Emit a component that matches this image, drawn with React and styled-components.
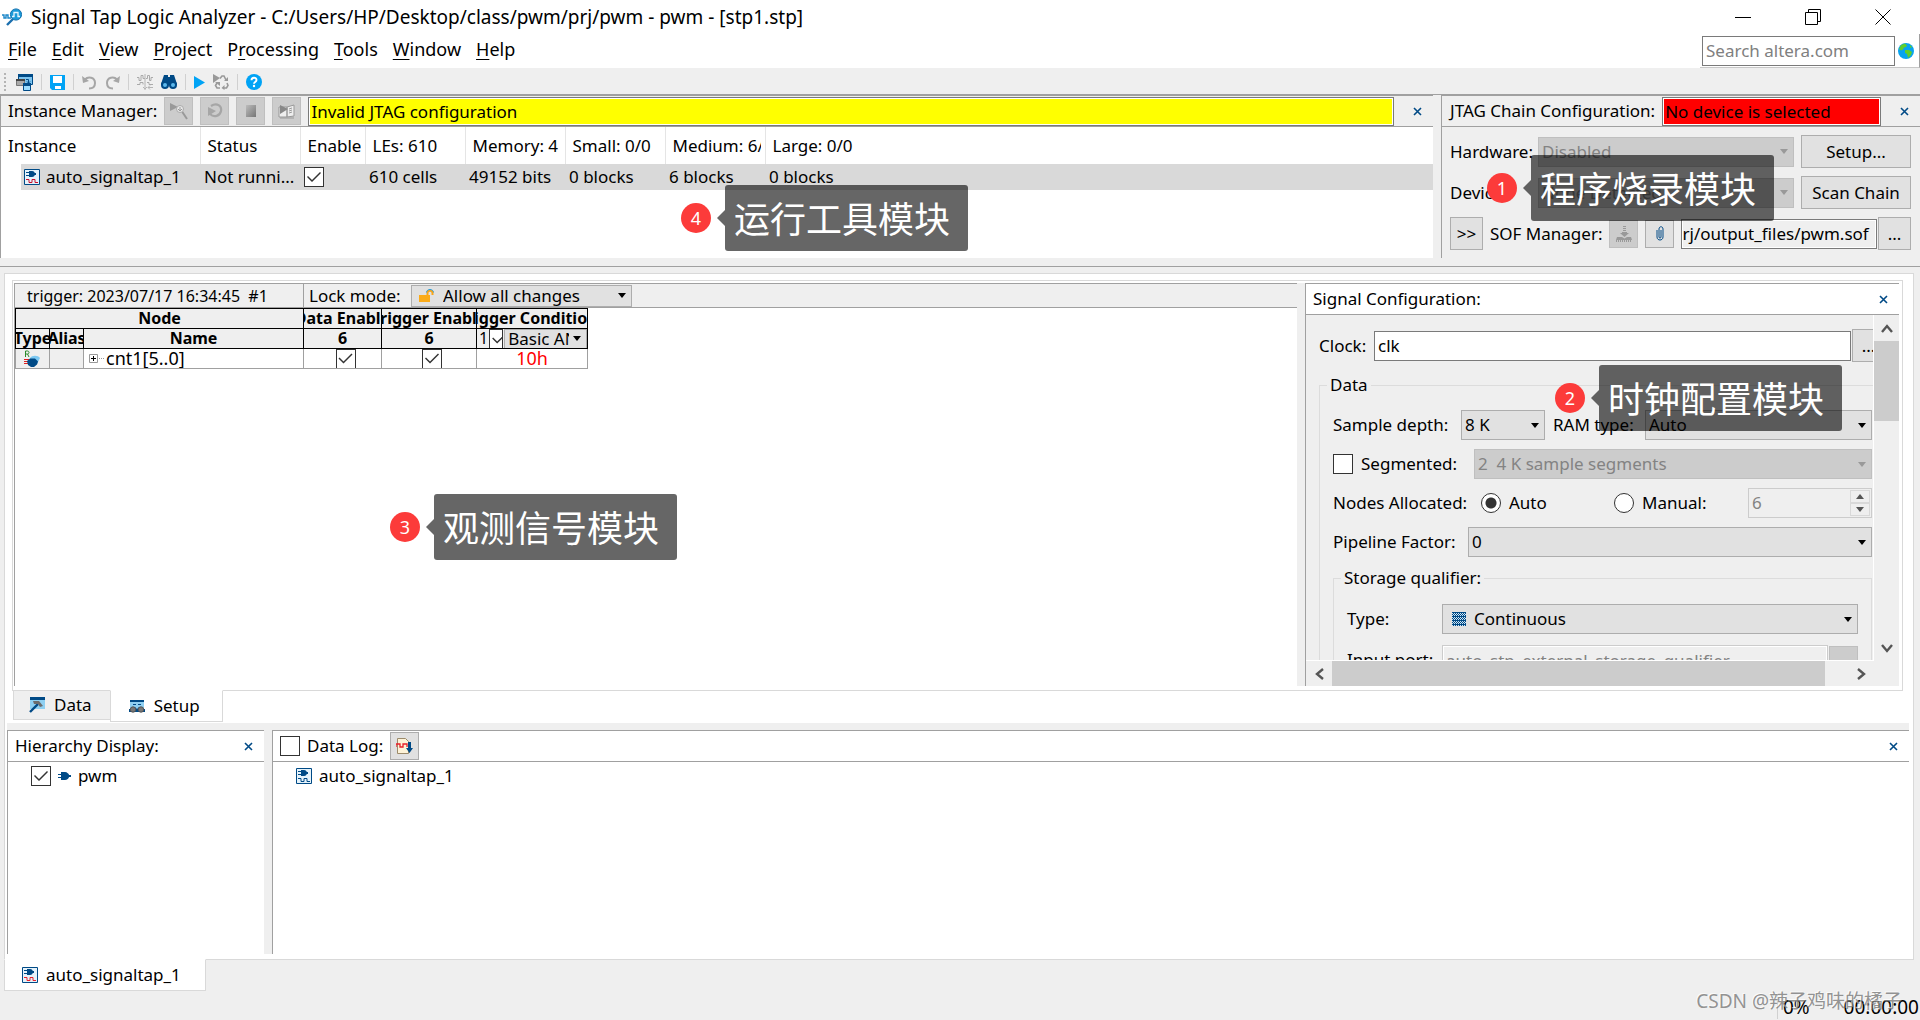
import React, { useState } from 'react';
import styled, { createGlobalStyle, css } from 'styled-components';

const GlobalStyle = createGlobalStyle`
    * {
        box-sizing: border-box;
    }

    body {
        margin: 0;
        background-color: #efefef;
    }

    body, button, input, select {
        font-family: 'Noto Sans', 'Noto Sans CJK SC', sans-serif;
        font-size: 17px;
        line-height: 24px;
        color: #000;
    }

    button {
        cursor: pointer;
    }
`

const Window = styled.div`
    position: relative;
    display: flex;
    flex-direction: column;
    min-height: 100vh;
    overflow: hidden;
    white-space: nowrap;
`

/* ---------- title and menu ---------- */

const TitleBar = styled.header`
    display: flex;
    align-items: center;
    height: 34px;
    padding: 0 2px;
    gap: 9px;
    background-color: #fff;
`

const Title = styled.h1`
    flex: 1;
    margin: 0;
    font-size: 19px;
    font-weight: 400;
`

const WindowButtons = styled.div`
    display: flex;

    button {
        display: flex;
        align-items: center;
        justify-content: center;
        width: 70px;
        height: 34px;
        border: none;
        background: none;
    }
`

const MenuRow = styled.div`
    display: flex;
    justify-content: space-between;
    height: 36px;
    background-color: #fff;
    border-bottom: 2px solid #efefef;
`

const Menu = styled.nav`
    display: flex;
    align-items: center;
    gap: 15px;
    height: 30px;
    padding: 0 8px;

    button {
        padding: 0;
        border: none;
        background: none;
        font-size: 18px;
    }

    u {
        text-underline-offset: 3px;
    }
`

const SearchBox = styled.div`
    display: flex;
    align-items: center;
    gap: 3px;
    padding: 0 5px 0 2px;
    border-right: 1px solid #a0a0a0;
    border-bottom: 1px solid #c8c8c8;

    input {
        width: 193px;
        height: 30px;
        padding: 0 3px;
        border: 1px solid #7a7a7a;
        outline: none;
    }

    input::placeholder {
        color: #808080;
        opacity: 1;
    }
`

/* ---------- toolbar ---------- */

const Toolbar = styled.div`
    display: flex;
    align-items: center;
    gap: 8px;
    height: 25px;
    padding: 0 4px;
    border-bottom: 1px solid #a0a0a0;
`

const ToolButton = styled.button`
    display: flex;
    padding: 0;
    border: none;
    background: none;
`

const ToolSeparator = styled.span`
    width: 1px;
    height: 16px;
    background-color: #d0d0d0;
`

const ToolHandle = styled.span`
    width: 2px;
    height: 18px;
    margin-right: 2px;
    background: repeating-linear-gradient(#b4b4b4 0 2px, transparent 2px 4px);
`

/* ---------- form controls ---------- */

const Button = styled.button`
    width: ${props => props.$width}px;
    height: 33px;
    padding: 0;
    flex: none;
    border: 1px solid #adadad;
    background-color: #e1e1e1;
`

const IconButton = styled.button`
    display: flex;
    align-items: center;
    justify-content: center;
    flex: none;
    width: 29px;
    height: 28px;
    padding: 0;
    border: 1px solid #adadad;
    background-color: #e1e1e1;

    &:disabled {
        border-color: #bfbfbf;
        background-color: #ccc;
        cursor: default;
    }
`

const CloseButton = styled.button`
    display: flex;
    align-items: center;
    justify-content: center;
    width: 32px;
    height: 24px;
    padding: 0;
    border: none;
    background: none;
`

const SelectWrapper = styled.div`
    display: grid;
    grid-template-columns: ${props => props.$icon ? '24px' : '0px'} minmax(0, 1fr) 14px;
    align-items: center;
    flex: ${props => props.$width ? 'none' : '1'};
    width: ${props => props.$width ? `${props.$width}px` : 'auto'};
    min-width: 0;

    select {
        grid-area: 1 / 1 / 2 / 4;
        width: 100%;
        height: ${props => props.$height || 30}px;
        line-height: ${props => (props.$height || 30) - 2}px;
        padding: 0 17px 0 ${props => props.$icon ? 31 : 3}px;
        border: 1px solid #adadad;
        border-radius: 0;
        background-color: #e1e1e1;
        appearance: none;
        outline: none;
    }

    select:disabled {
        border-color: #bfbfbf;
        background-color: #ccc;
        color: #838383;
        opacity: 1;
    }

    .icon {
        grid-area: 1 / 1;
        justify-self: end;
        pointer-events: none;
    }

    .arrow {
        grid-area: 1 / 3;
        pointer-events: none;
    }
`

const TextInput = styled.input`
    flex: 1;
    min-width: 0;
    height: 30px;
    padding: 0 3px;
    border: 1px solid #7a7a7a;
    border-radius: 0;
    background-color: ${props => props.$muted ? '#efefef' : '#fff'};
    outline: none;

    &:read-only {
        padding: 0;
        box-shadow: inset 0 0 0 1px #fff;
    }

    &:disabled {
        padding: 0 3px;
        border-color: #ccc;
        color: #838383;
    }
`

const Checkbox = styled.input.attrs({ type: 'checkbox' })`
    flex: none;
    width: 20px;
    height: 20px;
    margin: 0;
    border: 1px solid #333;
    background-color: #fff;
    overflow: hidden;
    appearance: none;

    &:checked::before {
        content: '';
        display: block;
        width: 18px;
        height: 18px;
        background-color: #333;
        clip-path: polygon(2px 9px, 3px 8px, 7px 12px, 15px 4px, 16px 5px, 7px 14px);
    }
`

const Radio = styled.input.attrs({ type: 'radio' })`
    flex: none;
    width: 20px;
    height: 20px;
    margin: 0;
    border: 1px solid #333;
    border-radius: 50%;
    background-color: #fff;
    appearance: none;

    &:checked {
        background: radial-gradient(circle, #333 5px, #fff 6px);
    }
`

/* ---------- top panels ---------- */

const TopPanels = styled.div`
    display: flex;
    gap: 8px;
    padding-bottom: 8px;
    border-bottom: 1px solid #a0a0a0;
`

const Panel = styled.section`
    display: flex;
    flex-direction: column;
    min-width: 0;
    flex: ${props => props.$width ? 'none' : '1'};
    width: ${props => props.$width ? `${props.$width}px` : 'auto'};
    border-left: 1px solid #a0a0a0;
    border-top: 1px solid #a0a0a0;
    background-color: ${props => props.$white ? '#fff' : '#efefef'};
`

const PanelHeader = styled.div`
    display: flex;
    align-items: center;
    flex: none;
    gap: 7px;
    height: 31px;
    padding-left: ${props => props.$indent || 7}px;
    border-bottom: 1px solid #a0a0a0;
    background-color: ${props => props.$white ? '#fff' : '#efefef'};

    h2, label {
        margin: 0;
        font-size: 17px;
        font-weight: 400;
        line-height: 26px;
    }

    .push {
        margin-left: auto;
    }
`

const StatusMessage = styled.output`
    flex: 1;
    height: 29px;
    padding: 0 2px;
    line-height: 27px;
    border: 1px solid #7a7a7a;
    box-shadow: inset 0 0 0 1px #fff;
    background-color: ${props => props.$color};
`

const InstanceTable = styled.table`
    width: 100%;
    table-layout: fixed;
    border-collapse: collapse;

    th, td {
        padding: 0;
        font-weight: 400;
        text-align: left;
        overflow: hidden;
    }

    th {
        height: 37px;
    }

    th > div {
        margin-right: 4px;
        padding-left: 7px;
        overflow: hidden;
    }

    th + th {
        border-left: 1px solid #e5e5e5;
    }

    td {
        height: 26px;
        padding-left: 4px;
        background-color: #d9d9d9;
    }

    td:first-child {
        padding-left: 20px;
        background-color: #fff;
    }

    input {
        display: block;
    }
`

const InstanceName = styled.div`
    display: flex;
    align-items: center;
    gap: 6px;
    height: 26px;
    padding-left: 3px;
    background-color: #d9d9d9;
`

const JtagBody = styled.div`
    display: flex;
    flex-direction: column;
    gap: 8px;
    padding: 8px 9px 8px 8px;
`

const JtagRow = styled.div`
    display: flex;
    align-items: center;
    gap: 7px;

    .fieldLabel {
        width: 81px;
    }
`

const FilePicker = styled.div`
    display: flex;
    align-items: center;
    flex: 1;
    min-width: 0;
    gap: 1px;
`

/* ---------- tab pane ---------- */

const TabPane = styled.main`
    display: flex;
    flex: 1;
    flex-direction: column;
    margin: 6px 6px 0 4px;
    border: 1px solid #d9d9d9;
    background-color: #fff;
`

const SetupPane = styled.div`
    display: flex;
    margin: 6px 10px 0 7px;
    padding: 2px 3px 4px 1px;
    border: 1px solid #d9d9d9;
`

const NodePanel = styled.section`
    flex: 1;
    min-width: 0;
    border-left: 1px solid #a0a0a0;
    border-top: 1px solid #a0a0a0;
`

const TriggerBar = styled.div`
    display: flex;
    align-items: center;
    height: 24px;
    background-color: #efefef;
    border-bottom: 1px solid #a0a0a0;

    .trigger {
        width: 289px;
        padding-left: 12px;
        font-size: 16px;
        white-space: pre;
        border-right: 1px solid #a0a0a0;
    }

    .lockLabel {
        width: 107px;
        padding-left: 5px;
    }
`

const NodeTable = styled.table`
    width: 572px;
    table-layout: fixed;
    border-collapse: collapse;
    font-size: 16px;

    th, td {
        height: 20px;
        padding: 0;
        overflow: hidden;
    }

    th {
        border: 1px solid #000;
        background-color: #efefef;
        font-weight: 700;
    }

    td {
        border: 1px solid #a0a0a0;
    }

    .cell {
        display: flex;
        align-items: center;
        justify-content: center;
        height: 19px;
        line-height: 19px;
        overflow: hidden;
    }

    .name {
        justify-content: flex-start;
        gap: 2px;
        padding-left: 5px;
        font-size: 18px;
    }

    .tick {
        padding-left: 6px;
    }

    .condition {
        font-weight: 400;
        justify-content: flex-start;
        padding-left: 2px;
        gap: 1px;

        input {
            width: 14px;
        }
    }

    .value {
        color: #f00;
        font-size: 18px;
    }

    .gray {
        background-color: #efefef;
    }
`

const Splitter = styled.div`
    flex: none;
    width: 8px;
    background-color: #efefef;
`

const ConfigScroll = styled.div`
    display: grid;
    grid-template-columns: minmax(0, 1fr) 25px;
    grid-template-rows: 346px 25px;
`

const ConfigForm = styled.form`
    padding: 14px 0 0 13px;
    overflow: hidden;
    border-right: 1px solid #fff;
    border-bottom: 1px solid #fff;
`

const FormRow = styled.div`
    display: flex;
    align-items: center;
    min-height: 30px;
    gap: ${props => props.$gap || 8}px;
    padding-right: ${props => props.$end || 0}px;
    margin-right: -${props => props.$bleed || 0}px;
`

const FieldLabel = styled.label`
    flex: none;
    width: ${props => props.$width ? `${props.$width}px` : 'auto'};
`

const Group = styled.fieldset`
    display: flex;
    flex-direction: column;
    gap: ${props => props.$gap || 9}px;
    min-width: 0;
    margin: ${props => props.$inner ? '0 1px 0 0' : '11px 0 0 0'};
    padding: ${props => props.$inner ? '14px 13px 40px 13px' : '13px 0 0 13px'};
    border: 1px solid #dcdcdc;
    ${props => !props.$inner && css`
        border-right: none;
    `}

    legend {
        margin-left: -6px;
        padding: 0 3px;
    }
`

const SpinBox = styled.div`
    display: flex;
    margin-left: auto;
    margin-right: 1px;
    width: 124px;
    height: 30px;
    padding: 1px;
    border: 1px solid #ccc;

    input {
        flex: 1;
        min-width: 0;
        padding: 0 2px;
        border: none;
        background: none;
        color: #838383;
        appearance: textfield;
    }

    input::-webkit-inner-spin-button {
        display: none;
    }

    div {
        display: flex;
        flex-direction: column;
        width: 20px;
    }

    button {
        display: flex;
        align-items: center;
        justify-content: center;
        flex: 1;
        padding: 0;
        border: 1px solid #d9d9d9;
        background: none;
    }
`

const ScrollTrack = styled.div`
    display: flex;
    align-items: center;
    flex-direction: ${props => props.$horizontal ? 'row' : 'column'};
    background-color: #efefef;

    button {
        display: flex;
        align-items: center;
        justify-content: center;
        width: ${props => props.$horizontal ? 26 : 25}px;
        height: ${props => props.$horizontal ? 25 : 26}px;
        padding: 0;
        border: none;
        background: none;
    }

    .thumb {
        flex: ${props => props.$horizontal ? 492 : 79};
        align-self: stretch;
        background-color: #ccc;
    }

    .rest {
        flex: ${props => props.$horizontal ? 23 : 213};
    }
`

const Tabs = styled.div`
    display: flex;
    align-items: flex-start;
    height: 33px;
    margin-top: -1px;
    padding-left: 8px;
`

const Tab = styled.button`
    display: flex;
    align-items: center;
    gap: 9px;
    height: ${props => props.$active ? 32 : 30}px;
    padding: 0 ${props => props.$active ? 22 : 18}px 0 ${props => props.$active ? 18 : 15}px;
    border: 1px solid #d9d9d9;
    background-color: ${props => props.$active ? '#fff' : '#efefef'};
    ${props => props.$active && css`
        margin-left: -1px;
        border-top-color: #fff;
    `}
`

const BottomPanels = styled.div`
    display: flex;
    flex: 1;
    margin: 0 4px 5px 2px;
    border-top: 7px solid #efefef;
`

const TreeRow = styled.div`
    display: flex;
    align-items: center;
    gap: 7px;
    height: 28px;
    padding-left: ${props => props.$indent}px;
`

/* ---------- bottom ---------- */

const FileTabs = styled.div`
    display: flex;
    height: 61px;
    margin-top: -1px;
    padding-left: 4px;
`

const FileTab = styled.button`
    display: flex;
    align-items: center;
    gap: 8px;
    width: 202px;
    height: 32px;
    padding: 0 17px;
    border: 1px solid #d9d9d9;
    border-top-color: #fff;
    background-color: #fff;
`

const StatusBar = styled.footer`
    display: flex;
    align-items: center;
    gap: 34px;
    margin-left: auto;
    align-self: flex-end;
    height: 26px;
    padding-right: 1px;
    font-size: 19px;

    span:first-child {
        padding-left: 5px;
        border-left: 1px solid #d0d0d0;
    }
`

const Watermark = styled.div`
    position: absolute;
    right: 18px;
    bottom: 5px;
    font-size: 19px;
    line-height: 28px;
    color: rgba(120, 120, 120, 0.8);
    text-shadow: -1px -1px 0 rgba(255, 255, 255, 0.7);
`

/* ---------- callouts over the panels ---------- */

const Callout = styled.div`
    position: absolute;
    top: ${props => props.$top}px;
    ${props => props.$right ? `right: ${props.$right}px` : `left: ${props.$left}px`};
    display: flex;
    align-items: center;

    .number {
        display: flex;
        align-items: center;
        justify-content: center;
        width: 30px;
        height: 30px;
        border-radius: 50%;
        background-color: #fc3b3a;
        color: #fff;
        font-size: 18px;
    }

    .pointer {
        margin-left: 6px;
        border: 8px solid transparent;
        border-left: none;
        border-right-color: rgba(0, 0, 0, 0.6);
    }

    .text {
        height: 66px;
        padding: 0 18px 0 9px;
        border-radius: 3px;
        background-color: rgba(0, 0, 0, 0.6);
        color: #fff;
        font-family: 'Noto Sans CJK SC', sans-serif;
        font-size: 36px;
        line-height: 64px;
    }
`

const DARK = '#004a86';
const SKY = '#00a3f5';

/* ---------- icons ---------- */

const Svg = ({ w = 16, h = 16, children, ...rest }) => (
    <svg width={w} height={h} viewBox={`0 0 ${w} ${h}`} aria-hidden='true' {...rest}>{children}</svg>
)

const LogoIcon = () => (
    <Svg w={20} h={18}>
        <path d='M0 7h2v3h2V7h2v3h3' fill='none' stroke='#1b86c8' strokeWidth='1.4' />
        <path d='M11 11L5 17' stroke='#1b6fae' strokeWidth='2.4' />
        <circle cx='14' cy='6.5' r='5.6' fill='#1b9ad8' stroke='#1573b0' />
        <path d='M10 8.500h2V4.500h4v4h2' fill='none' stroke='#e8f6ff' strokeWidth='1.3' />
    </Svg>
)

const CloseIcon = () => (
    <Svg w={9} h={9}><path d='M1 1l7 7M8 1L1 8' stroke={DARK} strokeWidth='1.6' /></Svg>
)

const ArrowIcon = ({ color = '#000' }) => (
    <Svg className='arrow' w={8} h={5}><path d='M0 0h8L4 5z' fill={color} /></Svg>
)

const GlobeIcon = () => (
    <Svg>
        <circle cx='8' cy='8' r='8' fill='#08a3ef' />
        <path d='M3 2l4-1.5 2 2-1 1.5-2 .5-1 2-2 1-2-1.500zM7 7l4 0 3 2-1 3-3 3-1-4-2-1zM12 2l2 2-2 1z' fill='#5fce2c' />
    </Svg>
)

const ManagerIcon = () => (
    <Svg w={17} h={17}>
        <path d='M2.500.5h14v10h-14z' fill='#7cc4ef' stroke={DARK} />
        <path d='M2 0h15v3H2z' fill={DARK} />
        <path d='M.5 5.500h8v6h-8z' fill='#a9a9a9' stroke='#777' />
        <path d='M0 5h9v2H0z' fill='#444' />
        <path d='M7.500 9.500h7v7h-7z' fill='#9bdcff' stroke={DARK} />
        <path d='M7 9h8v3H7z' fill={DARK} />
        <path d='M10 5.500h2.500V9M11 7.500l1.500 1.500L14 7.500' fill='none' stroke={DARK} />
    </Svg>
)

const SaveIcon = () => (
    <Svg w={15} h={15}>
        <path d='M0 0h15v15H2l-2-2z' fill={SKY} />
        <path d='M3 1h9v7H3zM5 11h6v3H5z' fill='#fff' />
    </Svg>
)

const UndoIcon = ({ flip }) => (
    <Svg w={15} h={15}>
        <g transform={flip ? 'translate(15 0) scale(-1 1)' : undefined}>
            <path d='M3 4.500C6 1 13 2 13 8c0 4-3 5.500-6 5.500' fill='none' stroke='#a6a6a6' strokeWidth='2' />
            <path d='M0 1l1 7 6-2z' fill='#a6a6a6' />
        </g>
    </Svg>
)

const WaveIcon = () => (
    <Svg w={16} h={16}>
        <path d='M0 3.500h2v3h2v-5h2v3h2M9 4.500h1.500v-3h2v5h1.500v-3h2M0 10.500h3v-2h3v2M10 8.500h2v2h4' fill='none' stroke='#aaa' />
        <path d='M8 0v16M6 13l2 2 2-2M11 13.500h5M13 11.500l-2 2 2 2' fill='none' stroke='#b4b4b4' />
    </Svg>
)

const BinocularsIcon = () => (
    <Svg w={16} h={16}>
        <path d='M3 1h4v2h2V1h4l3 9v1H0v-1z' fill={DARK} />
        <circle cx='4' cy='11' r='4' fill={DARK} />
        <circle cx='12' cy='11' r='4' fill={DARK} />
        <circle cx='4' cy='11' r='2' fill='#5bb8ec' />
        <circle cx='12' cy='11' r='2' fill='#5bb8ec' />
    </Svg>
)

const PlayIcon = () => (
    <Svg w={11} h={13}><path d='M0 0l11 6.500L0 13z' fill={SKY} /></Svg>
)

const RecycleIcon = () => (
    <Svg w={16} h={16}>
        <path d='M0 0l7 4-7 5z' fill='#999' />
        <path d='M7 4.500l2-2.500h2l2 4M14 9l1 2.500-1.500 2.500h-3M7 14H4l-1.500-2.500L4 9' fill='none' stroke='#999' strokeWidth='1.600' />
        <path d='M15 3v4h-4zM11.500 11v5l-3-2zM2 8h5v4z' fill='#999' />
    </Svg>
)

const HelpIcon = () => (
    <Svg>
        <circle cx='8' cy='8' r='8' fill={SKY} />
        <path d='M5.500 6.200C5.500 3 10.500 3 10.500 6c0 2-2.500 2-2.500 3.800' fill='none' stroke='#fff' strokeWidth='1.900' />
        <circle cx='8' cy='12' r='1.200' fill='#fff' />
    </Svg>
)

const RunOnceIcon = () => (
    <Svg w={20} h={18}>
        <path d='M1 1l8 4-8 4z' fill='#999' />
        <path d='M12 8l6 9' stroke='#999' strokeWidth='2' />
        <circle cx='11' cy='7' r='3.500' fill='#e8e8e8' stroke='#aaa' />
        <path d='M11 5v4M9 7l2 2 2-2' fill='none' stroke='#999' />
    </Svg>
)

const LoopIcon = () => (
    <Svg w={18} h={18}>
        <path d='M5 4C11 0 16 4 15 9c-1 5-7 7-11 3' fill='none' stroke='#a6a6a6' strokeWidth='2.200' />
        <path d='M2 5l8 4-8 5z' fill='#a6a6a6' />
    </Svg>
)

const StopIcon = () => (
    <Svg w={14} h={14}>
        <defs>
            <linearGradient id='stopFill' x1='0' y1='0' x2='1' y2='1'>
                <stop offset='0' stopColor='#bcbcbc' />
                <stop offset='1' stopColor='#757575' />
            </linearGradient>
        </defs>
        <path d='M2 1h10v12H2z' fill='url(#stopFill)' />
    </Svg>
)

const BookIcon = () => (
    <Svg w={18} h={16}>
        <path d='M1 4h8v10H1zM9 4l7-2v11l-7 1z' fill='#eee' stroke='#999' />
        <path d='M2 2l8 4-8 5z' fill='#888' />
        <path d='M11 6l3-1M11 8l3-1M11 10l3-1M2 15h14' stroke='#999' />
    </Svg>
)

const InstanceIcon = ({ wave = '#c8102e' }) => (
    <Svg>
        <path d='M.5.5h15v15H.5z' fill='#e6f3fb' stroke={DARK} />
        <path d='M5 2h3c4 0 4 6 0 6H5zM2 3h3v1H2zM2 6h3v1H2zM10 4h2v2h-2z' fill={DARK} />
        <path d='M2 10.500h3v3h3v-3h3v3h3' fill='none' stroke={wave} />
    </Svg>
)

const GateIcon = () => (
    <Svg w={13} h={8}><path d='M3 0h4c2 0 4 2 4 3h2v2h-2c0 1-2 3-4 3H3V6H0V5h3V3H0V2h3z' fill={DARK} /></Svg>
)

const RegisterIcon = () => (
    <Svg w={17} h={17}>
        <path d='M1.500 7V1h2c2 0 2 3 0 3h-2M3.500 4L5 7' fill='none' stroke='#2a8a2a' />
        <path d='M0 9.500h5M0 11.500h5M0 13.500h5' stroke='#e02020' />
        <path d='M6 8c2-3 8-3 10 0l-3 6H7z' fill='#7cc8f2' />
        <path d='M3 11l3-2.500h5l3 3-1 3-3 2.500H7l-3-2z' fill={DARK} />
    </Svg>
)

const LockIcon = ({ className }) => (
    <Svg className={className} w={16} h={14}>
        <path d='M8.500 6V4c0-3 5-3 5 0v2' fill='none' stroke='#f9a61a' strokeWidth='2' />
        <path d='M7.500 3.500c0-4 7-4 7 0' fill='none' stroke='#2c9bd2' />
        <path d='M0 6h11v7H0z' fill='#fbab18' />
    </Svg>
)

const ProgramIcon = () => (
    <Svg>
        <path d='M7 0h3v1H7zM7 2h3v1H7zM7 4h3v1H7zM6 6h5v1H6zM4 7h9L8.500 11z' fill='#999' />
        <path d='M1 11h5l2.500 1.500L11 11h4l1 3H0z' fill='#999' />
        <path d='M0 15h16' stroke='#999' strokeWidth='2' strokeDasharray='1 1' />
    </Svg>
)

const ClipIcon = () => (
    <Svg w={8} h={15}>
        <path d='M1 4v7c0 4 6 4 6 0V3c0-3-4-3-4 0v8c0 1.500 2 1.500 2 0V4' fill='none' stroke={DARK} />
    </Svg>
)

const ContinuousIcon = ({ className }) => (
    <Svg className={className} w={14} h={14}>
        <defs>
            <pattern id='weave' width='4' height='4' patternUnits='userSpaceOnUse'>
                <path d='M0 0h4v4H0z' fill={DARK} />
                <path d='M0 1h1v1H0zM1 2h1v1H1zM3 2h1v1H3zM2 3h1v1H2zM2 1h1v1H2zM0 3h1v1H0z' fill='#cfe6f5' />
            </pattern>
        </defs>
        <path d='M0 0h14v14H0z' fill='url(#weave)' />
    </Svg>
)

const DataTabIcon = () => (
    <Svg w={16} h={16}>
        <path d='M1 0h15v12H1z' fill='#8fd0f2' />
        <path d='M1 0h15v3H1z' fill={DARK} />
        <path d='M1 15l8-8' stroke={DARK} strokeWidth='2.400' />
        <path d='M4 4h6l4 5-3 1-2-3H5z' fill='#6d6d6d' />
    </Svg>
)

const SetupTabIcon = () => (
    <Svg w={16} h={13}>
        <path d='M1 0h14v11H1z' fill='#8fd0f2' />
        <path d='M1 0h14v2H1zM4 4h3v1H4zM9 4h3v1H9z' fill={DARK} />
        <path d='M0 12V9h1l2-2h3l2 2 2-2h3l2 2h1v3z' fill={DARK} />
        <circle cx='4' cy='9.500' r='2.700' fill='#777' stroke='#555' />
        <circle cx='12' cy='9.500' r='2.700' fill='#777' stroke='#555' />
    </Svg>
)

const LogIcon = () => (
    <Svg w={17} h={16}>
        <path d='M1.500.5h8l3 3v12h-11z' fill='#fdf3d8' stroke='#9c8b6b' />
        <path d='M0 9V6h4v3h3V6h4v3' fill='none' stroke='#e8202a' strokeWidth='1.300' />
        <path d='M12 4h3v6h2l-3.500 5L10 10h2z' fill={DARK} />
    </Svg>
)

const Chevron = ({ d, w, h }) => (
    <Svg w={w} h={h}><path d={d} fill='none' stroke='#555' strokeWidth='2.400' /></Svg>
)

const TreeExpander = () => (
    <Svg w={15} h={9}>
        <path d='M.5.5h8v8h-8z' fill='#fff' stroke='#999' />
        <path d='M2 4.500h5M4.500 2v5' stroke='#000' />
        <path d='M10 4.500h5' stroke='#999' strokeDasharray='1 1' />
    </Svg>
)

/* ---------- components ---------- */

const Select = ({ value, icon, width, height, ...rest }) => (
    <SelectWrapper $width={width} $height={height} $icon={!!icon}>
        <select {...rest}>
            <option>{value}</option>
        </select>
        {icon}
        <ArrowIcon color={rest.disabled ? '#999' : '#000'} />
    </SelectWrapper>
)

const menuItems = [
    ['', 'F', 'ile'],
    ['', 'E', 'dit'],
    ['', 'V', 'iew'],
    ['', 'P', 'roject'],
    ['P', 'r', 'ocessing'],
    ['', 'T', 'ools'],
    ['', 'W', 'indow'],
    ['', 'H', 'elp']
];

const columns = ['Status', 'Enable', 'LEs: 610', 'Memory: 4', 'Small: 0/0', 'Medium: 6/6', 'Large: 0/0'];
const columnWidths = [199, 100, 65, 100, 100, 100, 100];

const callouts = [
    { number: 1, text: '程序烧录模块', top: 155, right: 146 },
    { number: 2, text: '时钟配置模块', top: 365, right: 78 },
    { number: 3, text: '观测信号模块', top: 494, left: 390 },
    { number: 4, text: '运行工具模块', top: 185, left: 681 }
];

const Toolbox = () => (
    <Toolbar role='toolbar'>
        <ToolHandle />
        <ToolButton aria-label='Instance manager'><ManagerIcon /></ToolButton>
        <ToolSeparator />
        <ToolButton aria-label='Save'><SaveIcon /></ToolButton>
        <ToolSeparator />
        <ToolButton aria-label='Undo'><UndoIcon /></ToolButton>
        <ToolButton aria-label='Redo'><UndoIcon flip /></ToolButton>
        <ToolSeparator />
        <ToolButton aria-label='Insert node'><WaveIcon /></ToolButton>
        <ToolButton aria-label='Find'><BinocularsIcon /></ToolButton>
        <ToolSeparator />
        <ToolButton aria-label='Run analysis'><PlayIcon /></ToolButton>
        <ToolButton aria-label='Autorun analysis'><RecycleIcon /></ToolButton>
        <ToolSeparator />
        <ToolButton aria-label='Help'><HelpIcon /></ToolButton>
    </Toolbar>
)

const InstanceManager = () => {
    const [enabled, setEnabled] = useState(true);

    return (
        <Panel $white>
            <PanelHeader>
                <h2>Instance Manager:</h2>
                <IconButton disabled aria-label='Run'><RunOnceIcon /></IconButton>
                <IconButton disabled aria-label='Autorun'><LoopIcon /></IconButton>
                <IconButton disabled aria-label='Stop'><StopIcon /></IconButton>
                <IconButton disabled aria-label='Read data'><BookIcon /></IconButton>
                <StatusMessage $color='#ff0'>Invalid JTAG configuration</StatusMessage>
                <CloseButton aria-label='Close'><CloseIcon /></CloseButton>
            </PanelHeader>
            <InstanceTable>
                <colgroup>
                    {columnWidths.map((width, index) => <col key={index} width={width} />)}
                    <col />
                </colgroup>
                <thead>
                    <tr>
                        <th><div>Instance</div></th>
                        {columns.map(column => <th key={column}><div>{column}</div></th>)}
                    </tr>
                </thead>
                <tbody>
                    <tr>
                        <td><InstanceName><InstanceIcon />auto_signaltap_1</InstanceName></td>
                        <td>Not runni...</td>
                        <td><Checkbox aria-label='Enabled' checked={enabled} onChange={e => setEnabled(e.target.checked)} /></td>
                        <td>610 cells</td>
                        <td>49152 bits</td>
                        <td>0 blocks</td>
                        <td>6 blocks</td>
                        <td>0 blocks</td>
                    </tr>
                </tbody>
            </InstanceTable>
        </Panel>
    )
}

const JtagPanel = () => (
    <Panel $width={479}>
        <PanelHeader $indent={8}>
            <h2>JTAG Chain Configuration:</h2>
            <StatusMessage $color='#f00'>No device is selected</StatusMessage>
            <CloseButton aria-label='Close'><CloseIcon /></CloseButton>
        </PanelHeader>
        <JtagBody>
            <JtagRow>
                <label className='fieldLabel' htmlFor='hardware'>Hardware:</label>
                <Select id='hardware' value='Disabled' disabled />
                <Button $width={110}>Setup...</Button>
            </JtagRow>
            <JtagRow>
                <label className='fieldLabel' htmlFor='device'>Device:</label>
                <Select id='device' value='None Detected' disabled />
                <Button $width={110}>Scan Chain</Button>
            </JtagRow>
            <JtagRow>
                <Button $width={33}>&gt;&gt;</Button>
                <label htmlFor='sof'>SOF Manager:</label>
                <IconButton disabled aria-label='Program device'><ProgramIcon /></IconButton>
                <IconButton aria-label='Attach file'><ClipIcon /></IconButton>
                <FilePicker>
                    <TextInput id='sof' $muted readOnly value='rj/output_files/pwm.sof' />
                    <Button $width={33}>...</Button>
                </FilePicker>
            </JtagRow>
        </JtagBody>
    </Panel>
)

const NodeList = () => (
    <NodePanel>
        <TriggerBar>
            <span className='trigger'>trigger: 2023/07/17 16:34:45  #1</span>
            <label className='lockLabel' htmlFor='lockMode'>Lock mode:</label>
            <Select id='lockMode' value='Allow all changes' width={221} height={22} icon={<LockIcon className='icon' />} />
        </TriggerBar>
        <NodeTable>
            <colgroup>
                <col width='34' />
                <col width='34' />
                <col width='220' />
                <col width='78' />
                <col width='95' />
                <col width='111' />
            </colgroup>
            <thead>
                <tr>
                    <th colSpan='3'><div className='cell'>Node</div></th>
                    <th><div className='cell'>Data Enable</div></th>
                    <th><div className='cell'>Trigger Enable</div></th>
                    <th><div className='cell'>Trigger Conditions</div></th>
                </tr>
                <tr>
                    <th><div className='cell'>Type</div></th>
                    <th><div className='cell'>Alias</div></th>
                    <th><div className='cell'>Name</div></th>
                    <th><div className='cell'>6</div></th>
                    <th><div className='cell'>6</div></th>
                    <th>
                        <div className='cell condition'>
                            1
                            <Checkbox aria-label='Condition 1' defaultChecked />
                            <Select aria-label='Condition type' value='Basic AND' height={20} />
                        </div>
                    </th>
                </tr>
            </thead>
            <tbody>
                <tr>
                    <td className='gray'><div className='cell'><RegisterIcon /></div></td>
                    <td className='gray' />
                    <td><div className='cell name'><TreeExpander />cnt1[5..0]</div></td>
                    <td><div className='cell tick'><Checkbox aria-label='Data enable' defaultChecked /></div></td>
                    <td><div className='cell tick'><Checkbox aria-label='Trigger enable' defaultChecked /></div></td>
                    <td><div className='cell value'>10h</div></td>
                </tr>
            </tbody>
        </NodeTable>
    </NodePanel>
)

const SignalConfiguration = () => {
    const [allocation, setAllocation] = useState('auto');

    return (
        <Panel $width={594}>
            <PanelHeader $white>
                <h2>Signal Configuration:</h2>
                <CloseButton className='push' aria-label='Close'><CloseIcon /></CloseButton>
            </PanelHeader>
            <ConfigScroll>
                <ConfigForm>
                    <FormRow $gap={1} $bleed={12}>
                        <FieldLabel htmlFor='clock' $width={54}>Clock:</FieldLabel>
                        <TextInput id='clock' defaultValue='clk' />
                        <Button type='button' $width={33}>...</Button>
                    </FormRow>
                    <Group>
                        <legend>Data</legend>
                        <FormRow $end={1}>
                            <FieldLabel htmlFor='depth' $width={120}>Sample depth:</FieldLabel>
                            <Select id='depth' value='8 K' width={84} />
                            <FieldLabel htmlFor='ram' $width={84}>RAM type:</FieldLabel>
                            <Select id='ram' value='Auto' />
                        </FormRow>
                        <FormRow $end={1}>
                            <Checkbox id='segmented' />
                            <FieldLabel htmlFor='segmented' $width={105}>Segmented:</FieldLabel>
                            <Select aria-label='Segments' value={'2\u00a0 4 K sample segments'} disabled />
                        </FormRow>
                        <FormRow>
                            <FieldLabel as='span' $width={140}>Nodes Allocated:</FieldLabel>
                            <Radio id='auto' name='nodes' checked={allocation === 'auto'} onChange={() => setAllocation('auto')} />
                            <FieldLabel htmlFor='auto' $width={97}>Auto</FieldLabel>
                            <Radio id='manual' name='nodes' checked={allocation === 'manual'} onChange={() => setAllocation('manual')} />
                            <FieldLabel htmlFor='manual'>Manual:</FieldLabel>
                            <SpinBox>
                                <input type='number' aria-label='Nodes' defaultValue='6' disabled />
                                <div>
                                    <button type='button' aria-label='Increase'><Svg w={8} h={5}><path d='M0 5h8L4 0z' fill='#555' /></Svg></button>
                                    <button type='button' aria-label='Decrease'><Svg w={8} h={5}><path d='M0 0h8L4 5z' fill='#555' /></Svg></button>
                                </div>
                            </SpinBox>
                        </FormRow>
                        <FormRow $end={1}>
                            <FieldLabel htmlFor='pipeline' $width={127}>Pipeline Factor:</FieldLabel>
                            <Select id='pipeline' value='0' />
                        </FormRow>
                        <Group $inner $gap={11}>
                            <legend>Storage qualifier:</legend>
                            <FormRow>
                                <FieldLabel htmlFor='type' $width={87}>Type:</FieldLabel>
                                <Select id='type' value='Continuous' icon={<ContinuousIcon className='icon' />} />
                            </FormRow>
                            <FormRow $gap={1}>
                                <FieldLabel htmlFor='port' $width={94}>Input port:</FieldLabel>
                                <TextInput id='port' $muted disabled defaultValue='auto_stp_external_storage_qualifier' />
                                <IconButton type='button' disabled aria-label='Browse' />
                            </FormRow>
                        </Group>
                    </Group>
                </ConfigForm>
                <ScrollTrack>
                    <button type='button' aria-label='Scroll up'><Chevron w={12} h={9} d='M1 8l5-6 5 6' /></button>
                    <div className='thumb' />
                    <div className='rest' />
                    <button type='button' aria-label='Scroll down'><Chevron w={12} h={9} d='M1 1l5 6 5-6' /></button>
                </ScrollTrack>
                <ScrollTrack $horizontal>
                    <button type='button' aria-label='Scroll left'><Chevron w={9} h={12} d='M8 1L2 6l6 5' /></button>
                    <div className='thumb' />
                    <div className='rest' />
                    <button type='button' aria-label='Scroll right'><Chevron w={9} h={12} d='M1 1l6 5-6 5' /></button>
                </ScrollTrack>
            </ConfigScroll>
        </Panel>
    )
}

const App = () => {
    const [activeTab, setActiveTab] = useState('Setup');

    return (
        <Window>
            <GlobalStyle />
            <TitleBar>
                <LogoIcon />
                <Title>Signal Tap Logic Analyzer - C:/Users/HP/Desktop/class/pwm/prj/pwm - pwm - [stp1.stp]</Title>
                <WindowButtons>
                    <button aria-label='Minimize'><Svg><path d='M0 8.500h16' stroke='#000' /></Svg></button>
                    <button aria-label='Restore'>
                        <Svg><path d='M.5 3.500h12v12H.5zM3.500 3.500v-3h12v12h-3' fill='none' stroke='#000' /></Svg>
                    </button>
                    <button aria-label='Close window'><Svg><path d='M.5.5l15 15M15.500.5l-15 15' stroke='#000' /></Svg></button>
                </WindowButtons>
            </TitleBar>
            <MenuRow>
                <Menu>
                    {menuItems.map(([before, key, after]) => (
                        <button key={before + key + after}>{before}<u>{key}</u>{after}</button>
                    ))}
                </Menu>
                <SearchBox>
                    <input type='search' aria-label='Search' placeholder='Search altera.com' />
                    <GlobeIcon />
                </SearchBox>
            </MenuRow>
            <Toolbox />
            <TopPanels>
                <InstanceManager />
                <JtagPanel />
            </TopPanels>
            <TabPane>
                <SetupPane>
                    <NodeList />
                    <Splitter />
                    <SignalConfiguration />
                </SetupPane>
                <Tabs role='tablist'>
                    <Tab role='tab' $active={activeTab === 'Data'} onClick={() => setActiveTab('Data')}><DataTabIcon />Data</Tab>
                    <Tab role='tab' $active={activeTab === 'Setup'} onClick={() => setActiveTab('Setup')}><SetupTabIcon />Setup</Tab>
                </Tabs>
                <BottomPanels>
                    <Panel $white $width={257}>
                        <PanelHeader $white>
                            <h2>Hierarchy Display:</h2>
                            <CloseButton className='push' aria-label='Close'><CloseIcon /></CloseButton>
                        </PanelHeader>
                        <TreeRow $indent={23}>
                            <Checkbox id='pwm' defaultChecked />
                            <GateIcon />
                            <label htmlFor='pwm'>pwm</label>
                        </TreeRow>
                    </Panel>
                    <Splitter />
                    <Panel $white>
                        <PanelHeader $white>
                            <Checkbox id='dataLog' />
                            <label htmlFor='dataLog'>Data Log:</label>
                            <IconButton aria-label='Save data to log'><LogIcon /></IconButton>
                            <CloseButton className='push' aria-label='Close'><CloseIcon /></CloseButton>
                        </PanelHeader>
                        <TreeRow $indent={23}><InstanceIcon wave={DARK} />auto_signaltap_1</TreeRow>
                    </Panel>
                </BottomPanels>
            </TabPane>
            <FileTabs>
                <FileTab><InstanceIcon wave='#e8202a' />auto_signaltap_1</FileTab>
                <StatusBar>
                    <span>0%</span>
                    <span>00:00:00</span>
                </StatusBar>
            </FileTabs>
            <Watermark>CSDN @辣子鸡味的橘子</Watermark>
            {callouts.map(({ number, text, top, left, right }) => (
                <Callout key={number} $top={top} $left={left} $right={right}>
                    <span className='number'>{number}</span>
                    <span className='pointer' />
                    <span className='text'>{text}</span>
                </Callout>
            ))}
        </Window>
    )
}

export default App;
